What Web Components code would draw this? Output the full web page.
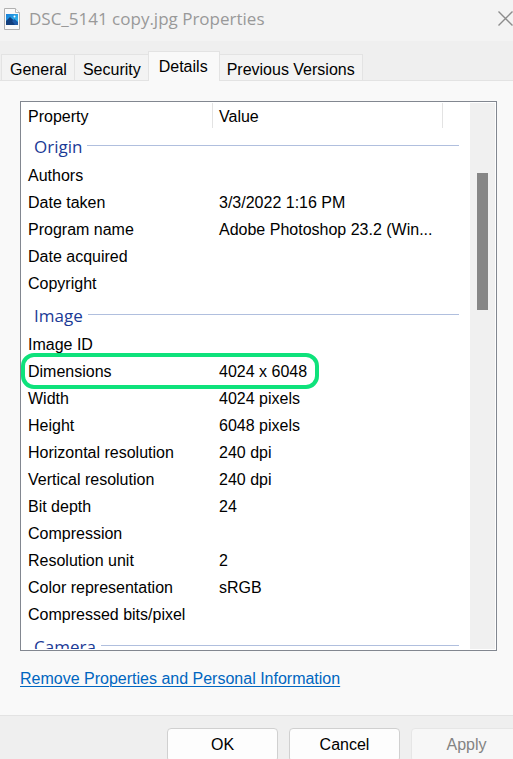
<!DOCTYPE html>
<html lang="en">
<head>
<meta charset="utf-8">
<meta name="viewport" content="width=device-width, initial-scale=1">
<title>DSC_5141 copy.jpg Properties</title>
<style>
    body{
        margin:0;
        font:16px/20px "Liberation Sans", Arial, sans-serif;
        color:#000;
    }
</style>
</head>
<body>

<properties-dialog>
    <title-bar slot="title">DSC_5141 copy.jpg Properties</title-bar>
    <tab-strip slot="tabs" tabs="General,Security,Details,Previous Versions" active="Details"></tab-strip>
    <property-list></property-list>
    <text-link href="#remove">Remove Properties and Personal Information</text-link>
    <dialog-button slot="buttons">OK</dialog-button>
    <dialog-button slot="buttons">Cancel</dialog-button>
    <dialog-button slot="buttons" disabled>Apply</dialog-button>
</properties-dialog>

<script>
class BaseElement extends HTMLElement{

    constructor(){
        super();
        this.attachShadow({mode:'open'});
    }

    connectedCallback(){
        this.render();
    }

    render(){
        const template = document.createElement("template");
        template.innerHTML = this.getStyles() + this.getTemplate();
        this.shadowRoot.replaceChildren(template.content.cloneNode(true));
    }
}

class PropertiesDialog extends BaseElement{

    getTemplate(){
        return `
            <slot name="title"></slot>
            <slot name="tabs"></slot>
            <main><slot></slot></main>
            <footer><slot name="buttons"></slot></footer>
        `;
    }

    getStyles(){
        return `
            <style>
                :host{
                    display:flex;
                    flex-direction:column;
                    height:100vh;
                    overflow:hidden;
                    background:#f9f9f9;
                }
                main{
                    flex:1;
                    min-height:0;
                    display:flex;
                    flex-direction:column;
                    align-items:flex-start;
                    gap:18px;
                    padding:20px 16px 26px 20px;
                }
                footer{
                    display:flex;
                    justify-content:flex-end;
                    gap:11px;
                    height:31px;
                    margin-right:-9px;
                    padding-top:12px;
                    border-top:1px solid #e3e3e3;
                    background:#efefef;
                }
            </style>
        `;
    }
}

class TitleBar extends BaseElement{

    getTemplate(){
        return `
            <svg class="file" width="16" height="22" viewBox="0 0 16 22" aria-hidden="true">
                <defs>
                    <linearGradient id="sky" x1="0" y1="0" x2="1" y2="1">
                        <stop offset="0" stop-color="#1a7fd8"/>
                        <stop offset="1" stop-color="#35c4f2"/>
                    </linearGradient>
                </defs>
                <path d="M.5 .5H11.5L15.5 4.5V21.5H.5Z" fill="#fafafa" stroke="#b0b0b0"/>
                <path d="M11.5 .5V4.5H15.5" fill="#fff" stroke="#b8b8b8"/>
                <rect x="2" y="6" width="12" height="11" fill="url(#sky)"/>
                <path d="M2 13L6 9L14 16V17H2Z" fill="#123f7d"/>
                <path d="M8 13L10.500 11L14 14V17H11Z" fill="#1d5ba8"/>
                <circle cx="10.500" cy="8.500" r="1" fill="#fff"/>
            </svg>
            <h1><slot></slot></h1>
            <button type="button" aria-label="Close">
                <svg width="15" height="15" viewBox="0 0 15 15" aria-hidden="true">
                    <path d="M.5 .5L14.500 14.500M14.500 .5L.5 14.500" stroke="#8c8c8c" stroke-width="1.400"/>
                </svg>
            </button>
        `;
    }

    getStyles(){
        return `
            <style>
                :host{
                    display:flex;
                    align-items:center;
                    height:37px;
                    padding:0 0 4px 4px;
                    background:#f3f3f3;
                }
                h1{
                    flex:1;
                    margin:0 0 0 9px;
                    font:400 17px/24px "Open Sans", "Noto Sans", sans-serif;
                    color:#999;
                }
                button{
                    display:flex;
                    padding:0;
                    border:0;
                    background:none;
                }
            </style>
        `;
    }
}

class TabStrip extends BaseElement{

    getTemplate(){
        const active = this.getAttribute("active");
        return this.getAttribute("tabs").split(",").map(name => `
            <button type="button" role="tab" aria-selected="${name === active}">${name}</button>
        `).join("");
    }

    getStyles(){
        return `
            <style>
                :host{
                    display:flex;
                    align-items:flex-end;
                    height:39px;
                    padding-left:1px;
                    background:linear-gradient(#efefef, #efefef) padding-box;
                    border-bottom:1px solid #e3e3e3;
                }
                button{
                    height:26px;
                    padding:4px 7px 0 8px;
                    font:inherit;
                    color:inherit;
                    white-space:nowrap;
                    border:1px solid #e3e3e3;
                    border-width:1px 0 0 1px;
                    background:#f3f3f3;
                }
                button:last-child{
                    border-right-width:1px;
                    padding-left:7px;
                }
                button[aria-selected=true]{
                    height:30px;
                    margin-bottom:-1px;
                    padding:0 11px 0 10px;
                    border-right-width:1px;
                    background:#f9f9f9;
                }
                button[aria-selected=true] + button{
                    border-left:0;
                }
            </style>
        `;
    }

    render(){
        super.render();
        const tabs = this.shadowRoot.querySelectorAll("button");
        tabs.forEach(tab => tab.addEventListener('click',()=>{
            tabs.forEach(t => t.setAttribute("aria-selected", t === tab));
        }));
    }
}

const groups = [
    { name:"Origin", rows:[
        ["Authors", ""],
        ["Date taken", "3/3/2022 1:16 PM"],
        ["Program name", "Adobe Photoshop 23.2 (Win..."],
        ["Date acquired", ""],
        ["Copyright", ""]
    ]},
    { name:"Image", rows:[
        ["Image ID", ""],
        ["Dimensions", "4024 x 6048", true],
        ["Width", "4024 pixels"],
        ["Height", "6048 pixels"],
        ["Horizontal resolution", "240 dpi"],
        ["Vertical resolution", "240 dpi"],
        ["Bit depth", "24"],
        ["Compression", ""],
        ["Resolution unit", "2"],
        ["Color representation", "sRGB"],
        ["Compressed bits/pixel", ""]
    ]},
    { name:"Camera", rows:[] }
];

class PropertyList extends BaseElement{

    getTemplate(){
        return `
            <div class="view">
                <table>
                    <colgroup><col class="name"><col class="value"><col></colgroup>
                    <thead>
                        <tr><th scope="col">Property</th><th scope="col">Value</th><td></td></tr>
                    </thead>
                    ${groups.map(group => this.getGroup(group)).join("")}
                </table>
            </div>
            <div class="track"><div class="thumb"></div></div>
        `;
    }

    getGroup(group){
        return `
            <tbody>
                <tr class="group"><th colspan="3" scope="rowgroup"><div><span>${group.name}</span></div></th></tr>
                ${group.rows.map(([name, value, marked]) => `
                    <tr>
                        <th scope="row">${name}${marked ? '<i class="mark"></i>' : ''}</th>
                        <td>${value}</td>
                        <td></td>
                    </tr>
                `).join("")}
            </tbody>
        `;
    }

    getStyles(){
        return `
            <style>
                :host{
                    flex:1;
                    min-height:0;
                    align-self:stretch;
                    display:flex;
                    padding:1px 1px 1px 0;
                    border:1px solid #828790;
                    background:#fff;
                }
                .view{
                    flex:1;
                    overflow:hidden;
                }
                table{
                    width:100%;
                    table-layout:fixed;
                    border-spacing:0;
                }
                .name{
                    width:192px;
                }
                .value{
                    width:230px;
                }
                th, td{
                    height:27px;
                    padding:0 0 0 6px;
                    box-sizing:border-box;
                    font-weight:400;
                    text-align:left;
                    white-space:nowrap;
                }
                th:first-child{
                    position:relative;
                    padding-left:7px;
                }
                thead th{
                    height:25px;
                    padding-top:2px;
                    border-right:1px solid #e3e3e3;
                }
                thead td{
                    height:25px;
                }
                .group th{
                    height:34px;
                    padding:0 11px 0 13px;
                }
                .group div{
                    display:flex;
                    align-items:center;
                    gap:5px;
                    font:17px/24px "Open Sans", "Noto Sans", sans-serif;
                    color:#1a3a96;
                }
                .group span{
                    padding-top:3px;
                    margin-bottom:-1px;
                }
                .group div::after{
                    content:"";
                    flex:1;
                    height:1px;
                    background:#b0bfde;
                }
                .mark{
                    position:absolute;
                    z-index:1;
                    top:-5px;
                    left:0;
                    width:298px;
                    height:36px;
                    box-sizing:border-box;
                    border:4px solid #0ee27b;
                    border-radius:13px;
                    pointer-events:none;
                }
                .track{
                    display:flex;
                    flex-direction:column;
                    align-items:center;
                    width:25px;
                    padding-top:70px;
                    box-sizing:border-box;
                    background:#f0f0f0;
                }
                .thumb{
                    width:11px;
                    height:137px;
                    background:#868686;
                }
            </style>
        `;
    }
}

class TextLink extends BaseElement{

    getTemplate(){
        return `<a href="${this.getAttribute("href")}"><slot></slot></a>`;
    }

    getStyles(){
        return `
            <style>
                :host{
                    display:block;
                }
                a{
                    color:#0066c0;
                    text-underline-offset:2px;
                    text-decoration-thickness:1px;
                }
            </style>
        `;
    }
}

class DialogButton extends BaseElement{

    getTemplate(){
        return `<button type="button" ${this.hasAttribute("disabled") ? "disabled" : ""}><slot></slot></button>`;
    }

    getStyles(){
        return `
            <style>
                :host{
                    display:block;
                }
                button{
                    width:111px;
                    height:34px;
                    padding:0;
                    font:inherit;
                    color:#000;
                    border:1px solid #d0d0d0;
                    border-radius:4px;
                    background:#fdfdfd;
                }
                button:disabled{
                    color:#838383;
                    border-color:#e6e6e6;
                    background:#f7f7f7;
                }
            </style>
        `;
    }
}

customElements.define("properties-dialog",PropertiesDialog);
customElements.define("title-bar",TitleBar);
customElements.define("tab-strip",TabStrip);
customElements.define("property-list",PropertyList);
customElements.define("text-link",TextLink);
customElements.define("dialog-button",DialogButton);
</script>
</body>
</html>
